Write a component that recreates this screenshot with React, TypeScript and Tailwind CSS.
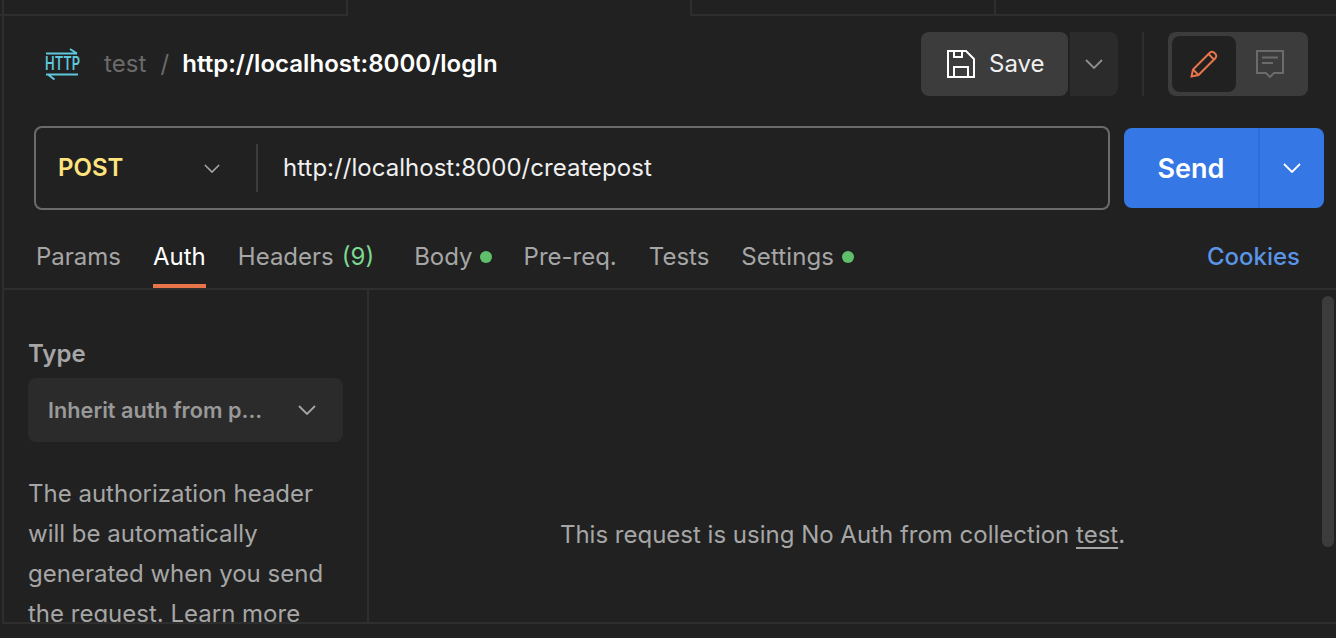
import React from 'react';

function Chevron({ className }: { className: string }) {
  return (
    <svg viewBox="0 0 18 10" fill="none" stroke="currentColor" strokeWidth="1.8" className={className}>
      <path d="M1 1l8 8 8-8" />
    </svg>
  );
}

function HttpIcon() {
  return (
    <div className="w-[32px] h-[32px] text-[#5fc8dc] relative">
      <svg viewBox="0 0 32 32" fill="none" stroke="currentColor" strokeWidth="2" className="absolute inset-0 w-[32px] h-[32px]">
        <path d="M0 5.500h31M24 1l7 4.500M0 26.500h32M8.500 31.500l-6.500-5" />
      </svg>
      <span className="absolute left-[-9px] top-[9px] w-[50px] text-center text-[19px] leading-[14px] font-semibold scale-x-[0.68]">HTTP</span>
    </div>
  );
}

function SaveIcon() {
  return (
    <svg viewBox="0 0 28 28" fill="none" stroke="currentColor" strokeWidth="2" className="w-[28px] h-[28px]">
      <path d="M1 1h18l8 8v18H1z" />
      <path d="M7 1v6h8V1M7 27V17h14v10" />
    </svg>
  );
}

function PencilIcon() {
  return (
    <svg viewBox="0 0 28 28" fill="none" stroke="currentColor" strokeWidth="2" className="w-[28px] h-[28px]">
      <path d="M1.500 26.500l1.500-7L20 2.500q2-1.500 4 0l1.500 1.500q1.500 2 0 4L8.500 25z" />
      <path d="M18.500 4l6 6M3 19.500l5.500 5.500" />
    </svg>
  );
}

function CommentIcon() {
  return (
    <svg viewBox="0 0 28 28" fill="none" stroke="currentColor" strokeWidth="2" className="w-[28px] h-[28px]">
      <path d="M1 1h26v22H18l-4 4-4-4H1z" />
      <path d="M6 7.500h16M6 13h11" />
    </svg>
  );
}

function Dot() {
  return <span className="w-[12px] h-[12px] rounded-full bg-[#5fbf6a]" />;
}

export default function App() {
  return (
    <div className="w-[1336px] h-[638px] overflow-hidden bg-[#212121] font-['Inter',sans-serif] relative">
      {/* left edge line of the pane */}
      <div className="absolute left-[2px] top-0 bottom-[14px] w-[2px] bg-[#2e2e2e]" />

      {/* open tab strip, only the bottom of it is visible */}
      <div className="flex h-[16px]">
        <div className="w-[348px] border-r-2 border-b-2 border-[#2e2e2e]" />
        <div className="w-[342px]" />
        <div className="w-[306px] border-l-2 border-r-2 border-b-2 border-[#2e2e2e]" />
        <div className="flex-1 border-b-2 border-[#2e2e2e]" />
      </div>

      {/* title row */}
      <div className="flex items-center h-[64px] mt-[16px] pl-[46px] pr-[28px]">
        <HttpIcon />
        <span className="ml-[26px] text-[24px] tracking-[0.1px] text-[#6b6b6b]">test</span>
        <span className="ml-[14px] text-[24px] text-[#6b6b6b]">/</span>
        <span className="ml-[13px] text-[24px] font-semibold tracking-[0.03px] text-white">http://localhost:8000/logIn</span>
        <div className="ml-auto flex items-center h-[64px]">
          <button className="flex items-center w-[147px] h-[64px] rounded-[8px] bg-[#3c3c3c] pl-[26px] text-white">
            <SaveIcon />
            <span className="ml-[14px] text-[24px] text-[#f0f0f0]">Save</span>
          </button>
          <button className="flex items-center justify-center ml-[2px] w-[48px] h-[64px] rounded-r-[8px] bg-[#2b2b2b] text-[#8f8f8f]">
            <Chevron className="w-[18px] h-[10px]" />
          </button>
          <div className="ml-[24px] w-[2px] h-[64px] bg-[#2e2e2e]" />
          <div className="ml-[24px] flex items-center w-[140px] h-[64px] rounded-[8px] bg-[#3c3c3c] p-[4px]">
            <div className="flex items-center justify-center w-[64px] h-[56px] rounded-[8px] bg-[#212121] text-[#e8744a]">
              <PencilIcon />
            </div>
            <div className="flex items-center justify-center w-[68px] h-[56px] text-[#6b6b6b]">
              <CommentIcon />
            </div>
          </div>
        </div>
      </div>

      {/* url row */}
      <div className="flex items-center mt-[30px] pl-[34px] pr-[12px]">
        <div className="flex items-center w-[1076px] h-[84px] rounded-[8px] border-2 border-[#6b6b6b]">
          <span className="ml-[22px] w-[146px] text-[24px] font-semibold text-[#ffe47e]">POST</span>
          <Chevron className="w-[16px] h-[9px] text-[#a6a6a6]" />
          <div className="ml-[36px] w-[2px] h-[48px] bg-[#3c3c3c]" />
          <span className="ml-[25px] text-[24px] tracking-[0.03px] text-[#f0f0f0]">http://localhost:8000/createpost</span>
        </div>
        <div className="flex items-center ml-[14px] w-[200px] h-[80px] rounded-[8px] bg-[#3578e5] text-white">
          <span className="w-[134px] pt-[1px] text-center text-[27px] leading-[79px] font-semibold">Send</span>
          <div className="flex items-center justify-center flex-1 h-[80px] border-l-2 border-[#2f6fd6]">
            <Chevron className="w-[18px] h-[10px]" />
          </div>
        </div>
      </div>

      {/* request tabs */}
      <div className="flex items-end h-[80px] ml-[4px] pl-[32px] pr-[36px] border-b-2 border-[#2e2e2e] text-[24px] text-[#a6a6a6]">
        <div className="flex items-center h-[78px] pt-[16px]">Params</div>
        <div className="relative flex items-center h-[78px] pt-[16px] ml-[32px] text-white">
          Auth
          <div className="absolute left-0 right-0 bottom-0 h-[4px] bg-[#e8744a]" />
        </div>
        <div className="flex items-center h-[78px] pt-[16px] ml-[32px]">
          Headers
          <span className="ml-[8px] text-[#7bd88f]">(9)</span>
        </div>
        <div className="flex items-center gap-[7px] h-[78px] pt-[16px] ml-[40px]">
          Body
          <Dot />
        </div>
        <div className="flex items-center h-[78px] pt-[16px] ml-[32px]">Pre-req.</div>
        <div className="flex items-center h-[78px] pt-[16px] ml-[32px]">Tests</div>
        <div className="flex items-center gap-[8px] h-[78px] pt-[16px] ml-[32px] tracking-[0.1px]">
          Settings
          <Dot />
        </div>
        <div className="flex items-center h-[78px] pt-[16px] ml-auto font-medium text-[#5a94e6]">Cookies</div>
      </div>

      {/* auth pane */}
      <div className="flex h-[334px] ml-[4px] border-b-2 border-[#2e2e2e] relative">
        <div className="w-[365px] h-full overflow-hidden border-r-2 border-[#2e2e2e] pl-[24px] pr-[22px] pt-[48px]">
          <div className="text-[24px] leading-[32px] font-semibold text-[#a6a6a6]">Type</div>
          <div className="flex items-center w-[315px] h-[64px] mt-[8px] rounded-[8px] bg-[#2b2b2b] pl-[20px] text-[21.7px] font-semibold text-[#999999]">
            <span className="w-[250px]">Inherit auth from p...</span>
            <Chevron className="w-[18px] h-[10px] text-[#a6a6a6]" />
          </div>
          <p className="mt-[32px] text-[24px] leading-[40px] text-[#a6a6a6]">
            The authorization header will be automatically generated when you send the request. Learn more
          </p>
        </div>
        <div className="flex-1 flex items-center justify-center text-[24px] text-[#a6a6a6] pt-[157px] pr-[20px]">
          <span>
            This request is using No Auth from collection <span className="underline underline-offset-4">test</span>.
          </span>
        </div>
        <div className="absolute right-[2px] top-[6px] w-[12px] h-[251px] rounded-full bg-[#3c3c3c]" />
      </div>
    </div>
  );
}
